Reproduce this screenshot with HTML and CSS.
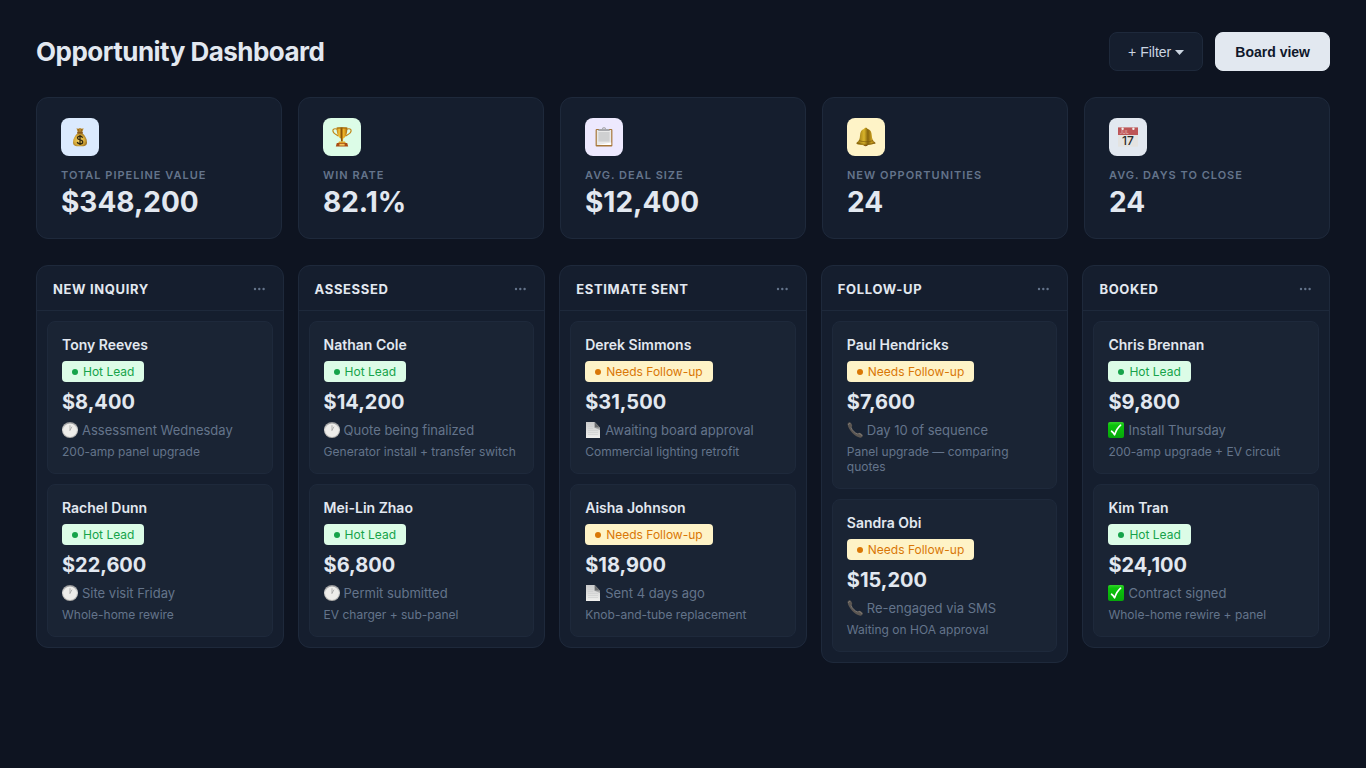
FILE: index.html
```
<!DOCTYPE html>
<html lang="en">
<head>
    <meta charset="UTF-8">
    <meta name="viewport" content="width=device-width, initial-scale=1.0">
    <title>Opportunity Dashboard</title>
    <link rel="stylesheet" href="styles.css">
</head>
<body>

    <!-- Shared icons -->
    <svg class="sprite" aria-hidden="true">
        <defs>
            <linearGradient id="clockRim" x1="0" y1="0" x2="0" y2="1">
                <stop offset="0" stop-color="#8d8e90"/>
                <stop offset="0.45" stop-color="#dcdcda"/>
                <stop offset="1" stop-color="#aaa9a6"/>
            </linearGradient>
            <linearGradient id="paper" x1="0" y1="0" x2="0" y2="1">
                <stop offset="0" stop-color="#c9cacb"/>
                <stop offset="1" stop-color="#f0f0ee"/>
            </linearGradient>
            <linearGradient id="tick" x1="0" y1="0" x2="0" y2="1">
                <stop offset="0" stop-color="#35d32b"/>
                <stop offset="0.2" stop-color="#0cc40c"/>
                <stop offset="1" stop-color="#06a80a"/>
            </linearGradient>
            <linearGradient id="gold" x1="0" y1="0" x2="1" y2="0">
                <stop offset="0" stop-color="#b87a12"/>
                <stop offset="0.25" stop-color="#f6c83e"/>
                <stop offset="0.45" stop-color="#8a5206"/>
                <stop offset="0.65" stop-color="#f3b92a"/>
                <stop offset="1" stop-color="#a8650c"/>
            </linearGradient>
            <linearGradient id="brass" x1="0" y1="0" x2="1" y2="0">
                <stop offset="0" stop-color="#8a680e"/>
                <stop offset="0.4" stop-color="#d9b42a"/>
                <stop offset="0.6" stop-color="#86640c"/>
                <stop offset="0.8" stop-color="#c79d20"/>
                <stop offset="1" stop-color="#84580e"/>
            </linearGradient>
            <radialGradient id="sack" cx="0.45" cy="0.55" r="0.6">
                <stop offset="0" stop-color="#f6d66a"/>
                <stop offset="0.6" stop-color="#d9ad3c"/>
                <stop offset="1" stop-color="#94691c"/>
            </radialGradient>
        </defs>
        <symbol id="clock" viewBox="0 0 16 16">
            <circle cx="8" cy="8" r="8" fill="url(#clockRim)"/>
            <circle cx="8" cy="8.2" r="6.8" fill="#eeedea"/>
            <path d="M8 8.2V3.6M8 8.2L9.8 5" stroke="#98999a" stroke-width="0.7" stroke-linecap="round"/>
        </symbol>
        <symbol id="page" viewBox="0 0 16 16">
            <path d="M1 0H9.6L15 5.8V16H1Z" fill="url(#paper)"/>
            <path d="M9.6 0V5.8H15Z" fill="#6a6c6e"/>
            <path d="M9.6 5.8H15V8Z" fill="#a7a8a9"/>
            <path d="M3 4.5H8M3 6.5H8M3 8.5H13M3 10.5H13M3 12.5H13" stroke="#cbcccc" stroke-width="0.6"/>
        </symbol>
        <symbol id="phone" viewBox="0 0 16 16">
            <path d="M0.6 2.6C0.3 1.6 1.6 0.2 2.8 0.3C4 0.5 5.3 3 5.2 4C5.1 4.8 4.2 5 4.3 5.7C4.7 7.8 8.3 11.2 10.3 11.7C11 11.8 11.2 10.9 12 10.8C13.2 10.7 15.7 12.3 15.8 13.4C15.9 14.6 14.3 15.9 13.2 15.7C7.5 14.6 1.6 8.2 0.6 2.6Z" fill="#5b5652"/>
            <path d="M1.5 2.4C1.8 1.5 2.4 1.2 2.9 1.5M4.2 5.7C5 8.2 8 11.2 10.4 11.9M12 11.6C13.4 11.6 14.7 12.7 14.8 13.5" fill="none" stroke="#8d867f" stroke-width="0.8" stroke-linecap="round"/>
        </symbol>
        <symbol id="check" viewBox="0 0 16 16">
            <rect width="16" height="16" rx="2" fill="url(#tick)"/>
            <path d="M3.6 9.2C4.8 10 5.8 11.4 6.6 12.8C8 8.8 9.8 5.6 12.6 3.2" fill="none" stroke="#fff" stroke-width="1.7" stroke-linecap="round" stroke-linejoin="round"/>
        </symbol>
        <symbol id="dots" viewBox="0 0 14 4">
            <circle cx="2" cy="2" r="1.2"/>
            <circle cx="6.3" cy="2" r="1.2"/>
            <circle cx="10.6" cy="2" r="1.2"/>
        </symbol>
    </svg>

    <div class="container">
        <header class="page-header">
            <h1>Opportunity Dashboard</h1>
            <div class="actions">
                <button type="button" class="btn">+ Filter
                    <svg class="caret" viewBox="0 0 9 5" aria-hidden="true"><path d="M0 0H9L4.5 5Z"/></svg>
                </button>
                <button type="button" class="btn btn-primary">Board view</button>
            </div>
        </header>

        <section class="stats">
            <div class="stat">
                <div class="stat-icon blue">
                    <svg viewBox="0 0 20 20" aria-hidden="true">
                        <path d="M6.5 1.2L8.2 1.8L10 1L11.8 1.8L13.6 1.2L12.2 5.4H7.8Z" fill="#b9872c"/>
                        <path d="M8.2 2L9 5M11.8 2L11 5" stroke="#7c5515" stroke-width="0.6"/>
                        <path d="M7.8 6C4.8 8.6 3 12 3 15.4C3 18.4 5 19.2 10 19.2S17 18.4 17 15.4C17 12 15.2 8.6 12.2 6Z" fill="url(#sack)"/>
                        <rect x="7" y="5" width="6" height="1.6" rx="0.8" fill="#8a5a1c"/>
                        <path d="M12.6 10.7C12.2 9.7 11.3 9.2 10 9.2C8.5 9.2 7.5 10 7.5 11.1C7.5 13.8 12.7 12.1 12.7 14.9C12.7 16.1 11.6 16.9 10 16.9C8.6 16.9 7.5 16.2 7.2 15M10 8V18" fill="none" stroke="#33290f" stroke-width="1.3"/>
                    </svg>
                </div>
                <div class="stat-label">Total Pipeline Value</div>
                <div class="stat-value">$348,200</div>
            </div>
            <div class="stat">
                <div class="stat-icon green">
                    <svg viewBox="0 0 20 20" aria-hidden="true">
                        <path d="M5.4 2.2C2.5 1.2 0.6 2 0.9 4C1.3 6.6 3.6 7.4 6.4 9M14.6 2.2C17.5 1.2 19.4 2 19.1 4C18.7 6.6 16.4 7.4 13.6 9" fill="none" stroke="#c08516" stroke-width="1.2"/>
                        <path d="M4.6 0.6H15.4C15.4 6.4 14 10.4 11.2 11.6L11 14.6H9L8.8 11.6C6 10.4 4.6 6.4 4.6 0.6Z" fill="url(#gold)"/>
                        <ellipse cx="10" cy="0.9" rx="5.4" ry="0.6" fill="#9b6209"/>
                        <path d="M7 14.4H13L13.8 16H6.2Z" fill="#dca229"/>
                        <path d="M4.8 16H15.2L16.2 19.6H3.8Z" fill="#a94c12"/>
                        <rect x="7.4" y="16.8" width="5.2" height="1.8" fill="#f1c65a"/>
                    </svg>
                </div>
                <div class="stat-label">Win Rate</div>
                <div class="stat-value">82.1%</div>
            </div>
            <div class="stat">
                <div class="stat-icon purple">
                    <svg viewBox="0 0 20 20" aria-hidden="true">
                        <rect x="1.6" y="2" width="16.8" height="17.6" rx="1" fill="#a8773a"/>
                        <rect x="2.8" y="3" width="14.4" height="15" fill="#e9e9e9"/>
                        <rect x="4.4" y="5" width="11.2" height="9.6" fill="#cfd0d1"/>
                        <path d="M3.6 18L17.2 15.6V18Z" fill="#fff"/>
                        <path d="M5 2H8C8 0.8 8.8 0.2 10 0.2S12 0.8 12 2H15L16 4H4Z" fill="#a5a6aa"/>
                        <circle cx="10" cy="1.6" r="0.7" fill="#ede9fe"/>
                    </svg>
                </div>
                <div class="stat-label">Avg. Deal Size</div>
                <div class="stat-value">$12,400</div>
            </div>
            <div class="stat">
                <div class="stat-icon yellow">
                    <svg viewBox="0 0 20 20" aria-hidden="true">
                        <ellipse cx="9.6" cy="17.6" rx="2.4" ry="1.6" fill="#7a4a10"/>
                        <path d="M9.8 0.8C10.8 0.8 11.2 1.4 11.4 1.8C14.4 2.6 15.6 5 15.8 8.4C16 12.2 17 13.8 19.2 15.4C20 16.4 19.2 17 18 16.8C13 18.6 7 18.6 2 17.4C0.4 17.2 0 16.4 0.8 15.6C3 13.8 3.8 12 4 8.4C4.2 5 5.4 2.6 8.2 1.8C8.4 1.4 8.8 0.8 9.8 0.8Z" fill="url(#brass)"/>
                        <path d="M3 13.6C7 15.2 13 15.2 17 13.6M1.2 16C6 17.8 13 17.8 18.8 16" fill="none" stroke="#7c5a0a" stroke-width="0.7"/>
                    </svg>
                </div>
                <div class="stat-label">New Opportunities</div>
                <div class="stat-value">24</div>
            </div>
            <div class="stat">
                <div class="stat-icon gray">
                    <svg viewBox="0 0 20 20" aria-hidden="true">
                        <rect y="0.4" width="20" height="19.4" rx="0.6" fill="#e4e3e1"/>
                        <path d="M0 0.4H20V8H0Z" fill="#bd5557"/>
                        <circle cx="4.6" cy="1.8" r="1.2" fill="#f0eeec"/>
                        <circle cx="15.4" cy="1.8" r="1.2" fill="#f0eeec"/>
                        <text x="1.4" y="7.4" class="cal-month">JUL</text>
                        <text x="10" y="18" class="cal-day">17</text>
                    </svg>
                </div>
                <div class="stat-label">Avg. Days to Close</div>
                <div class="stat-value">24</div>
            </div>
        </section>

        <main class="board">
            <section class="column">
                <div class="column-header">
                    <h2>New Inquiry</h2>
                    <button type="button" class="more" aria-label="Column options"><svg><use href="#dots"/></svg></button>
                </div>
                <div class="column-body">
                    <article class="card">
                        <h3>Tony Reeves</h3>
                        <span class="badge hot">Hot Lead</span>
                        <div class="amount">$8,400</div>
                        <div class="note"><svg><use href="#clock"/></svg>Assessment Wednesday</div>
                        <p>200-amp panel upgrade</p>
                    </article>
                    <article class="card">
                        <h3>Rachel Dunn</h3>
                        <span class="badge hot">Hot Lead</span>
                        <div class="amount">$22,600</div>
                        <div class="note"><svg><use href="#clock"/></svg>Site visit Friday</div>
                        <p>Whole-home rewire</p>
                    </article>
                </div>
            </section>

            <section class="column">
                <div class="column-header">
                    <h2>Assessed</h2>
                    <button type="button" class="more" aria-label="Column options"><svg><use href="#dots"/></svg></button>
                </div>
                <div class="column-body">
                    <article class="card">
                        <h3>Nathan Cole</h3>
                        <span class="badge hot">Hot Lead</span>
                        <div class="amount">$14,200</div>
                        <div class="note"><svg><use href="#clock"/></svg>Quote being finalized</div>
                        <p>Generator install + transfer switch</p>
                    </article>
                    <article class="card">
                        <h3>Mei-Lin Zhao</h3>
                        <span class="badge hot">Hot Lead</span>
                        <div class="amount">$6,800</div>
                        <div class="note"><svg><use href="#clock"/></svg>Permit submitted</div>
                        <p>EV charger + sub-panel</p>
                    </article>
                </div>
            </section>

            <section class="column">
                <div class="column-header">
                    <h2>Estimate Sent</h2>
                    <button type="button" class="more" aria-label="Column options"><svg><use href="#dots"/></svg></button>
                </div>
                <div class="column-body">
                    <article class="card">
                        <h3>Derek Simmons</h3>
                        <span class="badge follow">Needs Follow-up</span>
                        <div class="amount">$31,500</div>
                        <div class="note"><svg><use href="#page"/></svg>Awaiting board approval</div>
                        <p>Commercial lighting retrofit</p>
                    </article>
                    <article class="card">
                        <h3>Aisha Johnson</h3>
                        <span class="badge follow">Needs Follow-up</span>
                        <div class="amount">$18,900</div>
                        <div class="note"><svg><use href="#page"/></svg>Sent 4 days ago</div>
                        <p>Knob-and-tube replacement</p>
                    </article>
                </div>
            </section>

            <section class="column">
                <div class="column-header">
                    <h2>Follow-up</h2>
                    <button type="button" class="more" aria-label="Column options"><svg><use href="#dots"/></svg></button>
                </div>
                <div class="column-body">
                    <article class="card">
                        <h3>Paul Hendricks</h3>
                        <span class="badge follow">Needs Follow-up</span>
                        <div class="amount">$7,600</div>
                        <div class="note"><svg><use href="#phone"/></svg>Day 10 of sequence</div>
                        <p>Panel upgrade — comparing quotes</p>
                    </article>
                    <article class="card">
                        <h3>Sandra Obi</h3>
                        <span class="badge follow">Needs Follow-up</span>
                        <div class="amount">$15,200</div>
                        <div class="note"><svg><use href="#phone"/></svg>Re-engaged via SMS</div>
                        <p>Waiting on HOA approval</p>
                    </article>
                </div>
            </section>

            <section class="column">
                <div class="column-header">
                    <h2>Booked</h2>
                    <button type="button" class="more" aria-label="Column options"><svg><use href="#dots"/></svg></button>
                </div>
                <div class="column-body">
                    <article class="card">
                        <h3>Chris Brennan</h3>
                        <span class="badge hot">Hot Lead</span>
                        <div class="amount">$9,800</div>
                        <div class="note"><svg><use href="#check"/></svg>Install Thursday</div>
                        <p>200-amp upgrade + EV circuit</p>
                    </article>
                    <article class="card">
                        <h3>Kim Tran</h3>
                        <span class="badge hot">Hot Lead</span>
                        <div class="amount">$24,100</div>
                        <div class="note"><svg><use href="#check"/></svg>Contract signed</div>
                        <p>Whole-home rewire + panel</p>
                    </article>
                </div>
            </section>
        </main>
    </div>

</body>
</html>
```
FILE: styles.css
```
* {
    box-sizing: border-box;
    margin: 0;
    padding: 0;
}
body {
    background-color: #0e1421;
    color: #e2e8f0;
    font-family: Inter, "Liberation Sans", sans-serif;
}
.sprite {
    position: absolute;
    width: 0;
    height: 0;
}
.container {
    padding: 32px 36px;
}

/* Header */
.page-header {
    display: flex;
    justify-content: space-between;
    align-items: center;
    margin-bottom: 26px;
}
h1 {
    font-size: 26px;
    line-height: 31px;
    font-weight: 700;
    letter-spacing: -0.02em;
}
.actions {
    display: flex;
    gap: 12px;
}
.btn {
    display: flex;
    align-items: center;
    gap: 4px;
    padding: 11px 18px 10px;
    border: 1px solid #1e293b;
    border-radius: 8px;
    background-color: #151e2e;
    color: #cbd5e1;
    font-family: "Liberation Sans", Arial, sans-serif;
    font-size: 14px;
    line-height: 16px;
    cursor: pointer;
}
.btn-primary {
    padding: 11px 19px 10px;
    border-color: #e2e8f0;
    background-color: #e2e8f0;
    color: #0f172a;
    font-weight: 700;
}
.caret {
    width: 9px;
    height: 5px;
    fill: #cbd5e1;
}

/* Stats */
.stats {
    display: grid;
    grid-template-columns: repeat(5, 1fr);
    gap: 16px;
    margin-bottom: 26px;
}
.stat {
    padding: 20px 24px 19px;
    border: 1px solid #1e293b;
    border-radius: 12px;
    background-color: #151e2e;
}
.stat-icon {
    display: flex;
    align-items: center;
    justify-content: center;
    width: 38px;
    height: 38px;
    margin-bottom: 12px;
    border-radius: 8px;
}
.stat-icon svg {
    width: 20px;
    height: 20px;
}
.blue {
    background-color: #dbeafe;
}
.green {
    background-color: #dcfce7;
}
.purple {
    background-color: #ede9fe;
}
.yellow {
    background-color: #fef3c7;
}
.gray {
    background-color: #e2e8f0;
}
.cal-month {
    font-size: 5px;
    fill: #e6b9b9;
}
.cal-day {
    font-size: 12px;
    font-weight: 500;
    text-anchor: middle;
    fill: #2b2b2b;
}
.stat-label {
    margin-bottom: 3px;
    color: #64748b;
    font-size: 11px;
    line-height: 15px;
    font-weight: 600;
    letter-spacing: 1px;
    text-transform: uppercase;
}
.stat-value {
    font-size: 28px;
    line-height: 33px;
    font-weight: 700;
}

/* Board */
.board {
    display: grid;
    grid-template-columns: repeat(5, 1fr);
    gap: 14px;
    align-items: start;
}
.column {
    border: 1px solid #1e293b;
    border-radius: 12px;
    background-color: #151e2e;
}
.column-header {
    display: flex;
    justify-content: space-between;
    align-items: center;
    padding: 15px 16px 13px;
    border-bottom: 1px solid #1e293b;
}
h2 {
    font-size: 13px;
    line-height: 16px;
    font-weight: 700;
    letter-spacing: 0.05em;
    text-transform: uppercase;
}
.more {
    display: flex;
    border: none;
    background: none;
    cursor: pointer;
}
.more svg {
    width: 14px;
    height: 4px;
    fill: #64748b;
}
.column-body {
    display: flex;
    flex-direction: column;
    gap: 10px;
    padding: 10px;
}
.card {
    padding: 14px;
    border: 1px solid #1e293b;
    border-radius: 8px;
    background-color: #1a2434;
}
h3 {
    margin-bottom: 8px;
    font-size: 14px;
    line-height: 17px;
    font-weight: 600;
}
.badge {
    display: flex;
    align-items: center;
    gap: 5px;
    width: fit-content;
    padding: 3px 10px;
    border-radius: 4px;
    font-size: 12px;
    line-height: 15px;
}
.badge::before {
    content: "";
    width: 6px;
    height: 6px;
    border-radius: 50%;
    background-color: currentColor;
}
.hot {
    background-color: #dcfce7;
    color: #16a34a;
}
.follow {
    background-color: #fef3c7;
    color: #d97706;
}
.amount {
    margin: 8px 0;
    font-size: 20px;
    line-height: 24px;
    font-weight: 700;
}
.note {
    display: flex;
    align-items: center;
    gap: 4px;
    margin-bottom: 6px;
    color: #64748b;
    font-size: 13px;
    line-height: 16px;
}
.note svg {
    width: 16px;
    height: 16px;
}
.card p {
    color: #64748b;
    font-size: 12px;
    line-height: 15px;
}
```
